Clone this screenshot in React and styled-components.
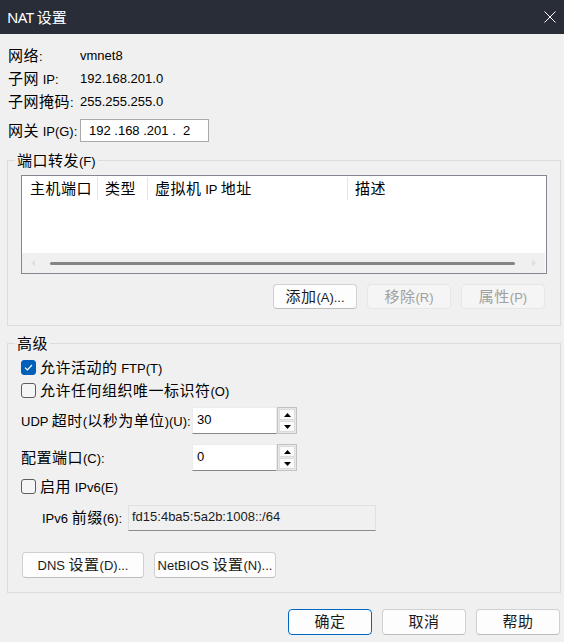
import React from 'react';
import styled, { createGlobalStyle } from 'styled-components';

const Global = createGlobalStyle`
  html, body { margin: 0; padding: 0; background: #f0f0f0; }
  body {
    font-family: "Liberation Sans", "Noto Sans CJK SC", sans-serif;
    font-size: 13px;
    color: #000;
  }
  * { box-sizing: border-box; }
`;

const Han = styled.span`
  font-family: "Noto Sans CJK SC", sans-serif;
  font-size: 15px;
  letter-spacing: 0.5px;
`;

const Run = styled.span`
  white-space: pre;
`;

const CJK = /([\u2E80-\u9FFF\uFF00-\uFFEF]+)/;
function T({ children }) {
  const parts = String(children).split(CJK);
  return (
    <Run>
      {parts.map((p, i) => (i % 2 === 1 ? <Han key={i}>{p}</Han> : p))}
    </Run>
  );
}

const Window = styled.div`
  width: 564px;
  height: 642px;
  display: flex;
  flex-direction: column;
  background: #f0f0f0;
  overflow: hidden;
`;

const TitleBar = styled.div`
  height: 34px;
  flex: none;
  background: #282d38;
  color: #ffffff;
  display: flex;
  align-items: center;
  justify-content: space-between;
  padding: 0 8px 0 7px;
`;

const Title = styled.div`
  font-family: "Noto Sans", "Noto Sans CJK SC", sans-serif;
  font-size: 15px;
  line-height: 34px;
  letter-spacing: -0.6px;
  ${Han} { font-size: 15px; letter-spacing: 0; }
`;

const CloseIcon = styled.svg`
  width: 12px;
  height: 12px;
  display: block;
`;

const Body = styled.div`
  flex: 1;
  display: flex;
  flex-direction: column;
  padding: 10px 3px 0 7px;
`;

const InfoGrid = styled.div`
  display: grid;
  grid-template-columns: 72px auto;
  grid-auto-rows: 23px;
  align-items: center;
  padding-left: 1px;
  line-height: 20px;
`;

const GatewayRow = styled.div`
  display: flex;
  align-items: center;
  margin-top: 6px;
  padding-left: 1px;
  line-height: 20px;
`;

const Label = styled.div`
  width: ${(p) => p.$w || 'auto'};
  flex: none;
  white-space: nowrap;
`;

const IpInput = styled.div`
  width: 129px;
  height: 23px;
  background: #ffffff;
  border: 1px solid #a9a9a9;
  padding-left: 8px;
  line-height: 21px;
  white-space: pre;
`;

const Group = styled.fieldset`
  margin: ${(p) => p.$mt}px 0 0;
  width: 554px;
  min-width: 0;
  border: 1px solid #dcdcdc;
  padding: ${(p) => p.$pt}px 13px ${(p) => p.$pb}px;
  display: flex;
  flex-direction: column;
`;

const Legend = styled.legend`
  padding: 0 2px;
  margin-left: -6px;
  line-height: 20px;
  height: 20px;
`;

const List = styled.div`
  height: 99px;
  border: 1px solid #828790;
  background: #ffffff;
  display: flex;
  flex-direction: column;
`;

const ListHeader = styled.div`
  height: 25px;
  flex: none;
  display: flex;
  align-items: center;
  line-height: 20px;
`;

const HeadCell = styled.div`
  width: ${(p) => (p.$w ? `${p.$w}px` : 'auto')};
  flex: ${(p) => (p.$w ? 'none' : 1)};
  height: 23px;
  display: flex;
  align-items: center;
  padding-left: ${(p) => p.$pl || 7}px;
  border-right: ${(p) => (p.$sep ? '1px solid #e5e5e5' : 'none')};
  white-space: nowrap;
`;

const ListFill = styled.div`
  flex: 1;
`;

const HScroll = styled.div`
  height: 20px;
  flex: none;
  background: #f0f0f0;
  margin-right: 1px;
  display: flex;
  align-items: center;
  padding: 0 8px;
  gap: 6px;
`;

const ScrollArrow = styled.svg`
  width: 6px;
  height: 8px;
  flex: none;
  display: block;
`;

const Thumb = styled.div`
  flex: 1;
  height: 3px;
  border-radius: 2px;
  background: #858585;
  margin: 0 10px 0 8px;
`;

const ButtonRow = styled.div`
  display: flex;
  justify-content: ${(p) => p.$justify || 'flex-end'};
  gap: 10px;
  margin-top: ${(p) => p.$mt || 0}px;
  padding: ${(p) => p.$pad || '0'};
`;

const Button = styled.button`
  width: ${(p) => p.$w || 84}px;
  height: ${(p) => p.$h || 25}px;
  margin: 0;
  padding: 0;
  font: inherit;
  line-height: 20px;
  border-radius: 4px;
  background: ${(p) => (p.disabled ? '#f5f5f5' : '#fdfdfd')};
  color: ${(p) => (p.disabled ? '#a0a0a0' : '#1b1b1b')};
  border: 1px solid ${(p) => (p.$primary ? '#0067c0' : p.disabled ? '#e6e6e6' : '#d0d0d0')};
  border-bottom-color: ${(p) => (p.$primary ? '#0067c0' : p.disabled ? '#e6e6e6' : '#bdbdbd')};
  white-space: nowrap;
  display: flex;
  align-items: center;
  justify-content: center;
`;

const CheckRow = styled.div`
  height: 23px;
  display: flex;
  align-items: center;
  gap: 4px;
  line-height: 20px;
  margin-top: ${(p) => p.$mt || 0}px;
`;

const Box = styled.div`
  width: 15px;
  height: 15px;
  flex: none;
  border-radius: 3px;
  background: ${(p) => (p.$on ? '#005fb8' : '#f5f5f5')};
  border: 1px solid ${(p) => (p.$on ? '#005fb8' : '#5d5d5d')};
  display: flex;
  align-items: center;
  justify-content: center;
`;

const FieldRow = styled.div`
  display: flex;
  align-items: center;
  margin-top: ${(p) => p.$mt || 0}px;
  padding-left: ${(p) => p.$indent || 0}px;
  line-height: 20px;
`;

const Spinner = styled.div`
  display: flex;
  height: 27px;
`;

const SpinInput = styled.div`
  width: 85px;
  height: 27px;
  background: #ffffff;
  border: 1px solid #ececec;
  border-bottom: 1px solid #868686;
  padding: 3px 0 0 4px;
  line-height: 18px;
`;

const SpinButtons = styled.div`
  width: 20px;
  height: 27px;
  border: 1px solid #c2c2c2;
  background: #e8e8e8;
  display: flex;
  flex-direction: column;
  gap: 1px;
  padding: 1px;
`;

const SpinBtn = styled.div`
  flex: 1;
  background: #fbfbfb;
  border: 1px solid #dcdcdc;
  display: flex;
  align-items: center;
  justify-content: center;
`;

const Tri = styled.svg`
  width: 7px;
  height: 4px;
  display: block;
`;

const ReadField = styled.div`
  width: 248px;
  height: 26px;
  background: #f0f0f0;
  border: 1px solid #e0e0e0;
  border-bottom: 1px solid #8c8c8c;
  padding: 2px 0 0 3px;
  line-height: 18px;
  color: #1b1b1b;
`;

function Check({ on }) {
  return (
    <Box $on={on}>
      {on && (
        <svg width="9" height="7" viewBox="0 0 9 7">
          <path d="M1 3.6 L3.4 6 L8 1" fill="none" stroke="#ffffff" strokeWidth="1.2" />
        </svg>
      )}
    </Box>
  );
}

function Spin({ value }) {
  return (
    <Spinner>
      <SpinInput>{value}</SpinInput>
      <SpinButtons>
        <SpinBtn>
          <Tri viewBox="0 0 7 4"><path d="M0 4 L3.5 0 L7 4 Z" fill="#000" /></Tri>
        </SpinBtn>
        <SpinBtn>
          <Tri viewBox="0 0 7 4"><path d="M0 0 L7 0 L3.5 4 Z" fill="#000" /></Tri>
        </SpinBtn>
      </SpinButtons>
    </Spinner>
  );
}

export default function App() {
  return (
    <>
      <Global />
      <Window>
        <TitleBar>
          <Title><T>NAT 设置</T></Title>
          <CloseIcon viewBox="0 0 12 12">
            <path d="M0.5 0.5 L11.5 11.5 M11.5 0.5 L0.5 11.5" stroke="#ffffff" strokeWidth="1" fill="none" />
          </CloseIcon>
        </TitleBar>
        <Body>
          <InfoGrid>
            <Label><T>网络:</T></Label>
            <div>vmnet8</div>
            <Label><T>子网 IP:</T></Label>
            <div>192.168.201.0</div>
            <Label><T>子网掩码:</T></Label>
            <div>255.255.255.0</div>
          </InfoGrid>
          <GatewayRow>
            <Label $w="72px"><T>网关 IP(G):</T></Label>
            <IpInput>{'192 .168 .201 .  2'}</IpInput>
          </GatewayRow>

          <Group $mt={8} $pt={5} $pb={16}>
            <Legend><T>端口转发(F)</T></Legend>
            <List>
              <ListHeader>
                <HeadCell $w={76} $pl={8} $sep><T>主机端口</T></HeadCell>
                <HeadCell $w={50} $sep><T>类型</T></HeadCell>
                <HeadCell $w={200} $sep><T>虚拟机 IP 地址</T></HeadCell>
                <HeadCell><T>描述</T></HeadCell>
              </ListHeader>
              <ListFill />
              <HScroll>
                <ScrollArrow viewBox="0 0 6 8"><path d="M5 0.5 L1 4 L5 7.5 Z" fill="#e0e0e0" /></ScrollArrow>
                <Thumb />
                <ScrollArrow viewBox="0 0 6 8"><path d="M1 0.5 L5 4 L1 7.5 Z" fill="#e0e0e0" /></ScrollArrow>
              </HScroll>
            </List>
            <ButtonRow $mt={10} $pad="0 2px 0 0">
              <Button><T>添加(A)...</T></Button>
              <Button disabled><T>移除(R)</T></Button>
              <Button disabled><T>属性(P)</T></Button>
            </ButtonRow>
          </Group>

          <Group $mt={7} $pt={3} $pb={14}>
            <Legend><T>高级</T></Legend>
            <CheckRow>
              <Check on />
              <T>允许活动的 FTP(T)</T>
            </CheckRow>
            <CheckRow>
              <Check />
              <T>允许任何组织唯一标识符(O)</T>
            </CheckRow>
            <FieldRow $mt={5}>
              <Label $w="171px"><T>UDP 超时(以秒为单位)(U):</T></Label>
              <Spin value="30" />
            </FieldRow>
            <FieldRow $mt={10}>
              <Label $w="171px"><T>配置端口(C):</T></Label>
              <Spin value="0" />
            </FieldRow>
            <CheckRow $mt={4}>
              <Check />
              <T>启用 IPv6(E)</T>
            </CheckRow>
            <FieldRow $mt={7} $indent={21}>
              <Label $w="86px"><T>IPv6 前缀(6):</T></Label>
              <ReadField>fd15:4ba5:5a2b:1008::/64</ReadField>
            </FieldRow>
            <ButtonRow $justify="flex-start" $mt={21} $pad="0 0 0 1px">
              <Button $w={122} $h={26}><T>DNS 设置(D)...</T></Button>
              <Button $w={122} $h={26}><T>NetBIOS 设置(N)...</T></Button>
            </ButtonRow>
          </Group>

          <ButtonRow $mt={16} $pad="0 1px 0 0">
            <Button $h={26} $primary><T>确定</T></Button>
            <Button $h={26}><T>取消</T></Button>
            <Button $h={26}><T>帮助</T></Button>
          </ButtonRow>
        </Body>
      </Window>
    </>
  );
}
